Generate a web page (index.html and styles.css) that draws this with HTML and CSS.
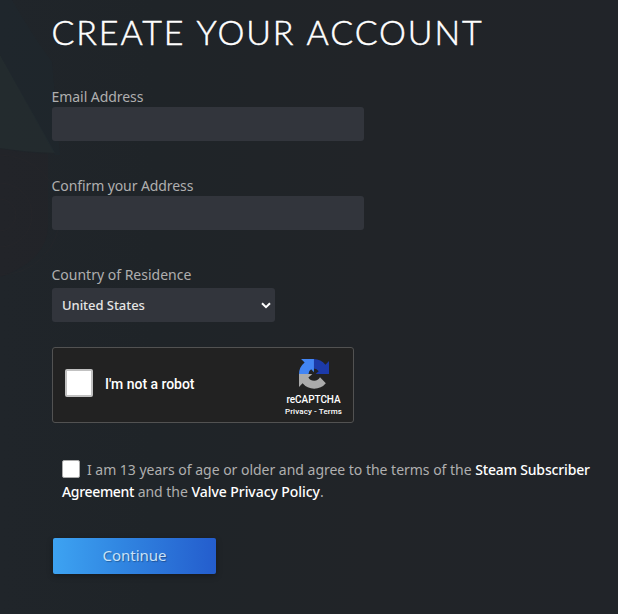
FILE: index.html
```html
<!DOCTYPE html>
<html lang="en">
<head>
<meta charset="utf-8">
<title>Create Your Account</title>
<link rel="stylesheet" href="styles.css">
</head>
<body>
<svg class="backdrop" viewBox="0 0 618 614" aria-hidden="true">
  <path d="M0 55L55 153Q25 152 0 148Z" fill="#252d30" opacity=".7"/>
  <path d="M0 0H12Q30 32 52 62L60 155H55L0 55Z" fill="#1e2a32" opacity=".3"/>
  <path d="M0 149Q27 153 48 154V225Q48 260 0 277Z" fill="#262427" opacity=".4"/>
  <g fill="none" stroke="#29282a" opacity=".4"><circle cx="0" cy="215" r="16"/><circle cx="0" cy="215" r="32"/><circle cx="0" cy="215" r="60"/></g>
</svg>
<main class="join">
  <h1 class="title">Create your account</h1>
  <form class="form">
    <div class="field">
      <label class="label label-email" for="email">Email Address</label>
      <input class="input" id="email" type="text">
    </div>
    <div class="field">
      <label class="label label-confirm" for="confirm">Confirm your Address</label>
      <input class="input" id="confirm" type="text">
    </div>
    <div class="field field-country">
      <label class="label" for="country">Country of Residence</label>
      <div class="select" id="country">
        <span class="select-value">United States</span>
        <svg class="chevron" width="10" height="7" viewBox="0 0 10 7"><path d="M1 1.2L5 5.2L9 1.2" fill="none" stroke="#fff" stroke-width="2"/></svg>
      </div>
    </div>
    <div class="captcha">
      <span class="captcha-box"></span>
      <span class="captcha-text">I'm not a robot</span>
      <div class="captcha-brand">
        <svg class="captcha-logo" width="30" height="30" viewBox="0 0 64 64">
          <path fill="#1c3aa9" d="M64 32V4.500L56.400 12.100A32 32 0 0 0 31.600 0V20A12 12 0 0 1 42 26L35.500 32.100Z"/>
          <path fill="#4285f4" d="M31.900 0H4.400L12 7.600A32 32 0 0 0 0 32.300H20A12 12 0 0 1 26 22L31.900 28.500Z"/>
          <path fill="#ababab" d="M0 32V59.500L7.600 51.900A32 32 0 0 0 57.200 51.500L44.800 39.100A14.300 14.300 0 0 1 20 39.500L28.500 32Z"/>
        </svg>
        <span class="captcha-name">reCAPTCHA</span>
        <span class="captcha-links">Privacy - Terms</span>
      </div>
    </div>
    <div class="agree">
      <div class="agree-line"><span class="agree-box"></span><span class="agree-first">I am 13 years of age or older and agree to the terms of the <a class="link">Steam Subscriber</a></span></div>
      <div class="agree-line"><span><a class="link link-agreement">Agreement</a> and the <a class="link link-policy">Valve Privacy Policy</a>.</span></div>
    </div>
    <button class="continue" type="button">Continue</button>
  </form>
</main>
</body>
</html>
```
FILE: styles.css
```css
* { box-sizing: border-box; }
body {
  margin: 0;
  height: 614px;
  overflow: hidden;
  background: linear-gradient(90deg, #20252a 0, #1f2428 25%, #212428 60%, #212429 100%);
  color: #afafaf;
  font-family: "Noto Sans", sans-serif;
  font-size: 14px;
}
.backdrop { position: absolute; left: 0; top: 0; width: 618px; height: 614px; }
.join { position: relative; padding: 11px 0 0 52px; }
.title {
  margin: -1px 0 1px -.5px;
  height: 76px;
  color: #fff;
  font-family: Lato, sans-serif;
  font-size: 34px;
  font-weight: 300;
  line-height: 44px;
  letter-spacing: 1.85px;
  word-spacing: 1.4px;
  text-transform: uppercase;
  white-space: nowrap;
  -webkit-text-stroke: .5px #fff;
}
.field { display: flex; flex-direction: column; height: 89px; }
.field-country { height: 82px; }
.label { height: 20px; margin-left: -.5px; line-height: 20px; font-size: 14px; white-space: nowrap; align-self: flex-start; }
.label-email { letter-spacing: -.05px; }
.label-confirm { letter-spacing: -.09px; }
.input {
  width: 312px;
  height: 34px;
  border: 0;
  border-radius: 3px;
  background: #32353c;
}
.select {
  display: flex;
  align-items: center;
  justify-content: space-between;
  width: 223px;
  height: 34px;
  margin-top: 3px;
  padding: 0 4px 0 10px;
  border-radius: 3px;
  background: #32353c;
  color: #e5e5e5;
  font-size: 13px;
  font-weight: 500;
}
.select-value { letter-spacing: -.05px; }
.captcha {
  display: flex;
  align-items: center;
  width: 302px;
  height: 76px;
  padding: 0 11px 0 12px;
  border: 1px solid #525252;
  border-radius: 3px;
  background: #222;
  color: #fff;
  font-family: Roboto, sans-serif;
}
.captcha-box {
  width: 28px;
  height: 28px;
  margin-top: -4px;
  border: 2px solid #c1c1c1;
  border-radius: 2px;
  background: #fff;
}
.captcha-text { margin: -3px auto 0 12px; font-size: 14px; font-weight: 500; letter-spacing: -.03px; }
.captcha-brand { display: flex; flex-direction: column; align-items: center; align-self: flex-start; padding-top: 11px; }
.captcha-logo { margin-left: 2px; }
.captcha-name { margin-top: 4px; font-size: 10px; line-height: 13px; font-weight: 500; letter-spacing: -.05px; }
.captcha-links { font-size: 8px; line-height: 12px; font-weight: 500; letter-spacing: .1px; }
.agree { height: 84px; margin: 35px 0 0 10px; }
.agree-line { display: flex; align-items: center; height: 22px; white-space: nowrap; letter-spacing: -.02px; }
.agree-box { width: 18px; height: 18px; margin-right: 7px; border: 1px solid #aaa; border-radius: 2px; background: #fff; }
.link { color: #fff; font-weight: 500; letter-spacing: -.16px; }
.link-agreement { letter-spacing: -.33px; }
.link-policy { letter-spacing: -.06px; }
.continue {
  display: block;
  width: 163px;
  height: 36px;
  margin: -4px 0 0 1px;
  padding: 0 0 2px;
  border: 0;
  border-radius: 2px;
  background: linear-gradient(90deg, #3da3f2 0, #3187e2 40%, #245dcd 100%);
  box-shadow: 0 2px 6px rgba(0, 0, 0, .3);
  color: #c9e2f8;
  font-family: "Noto Sans", sans-serif;
  font-size: 15px;
  text-shadow: 1px 1px 1px rgba(0, 0, 0, .3);
}
```
